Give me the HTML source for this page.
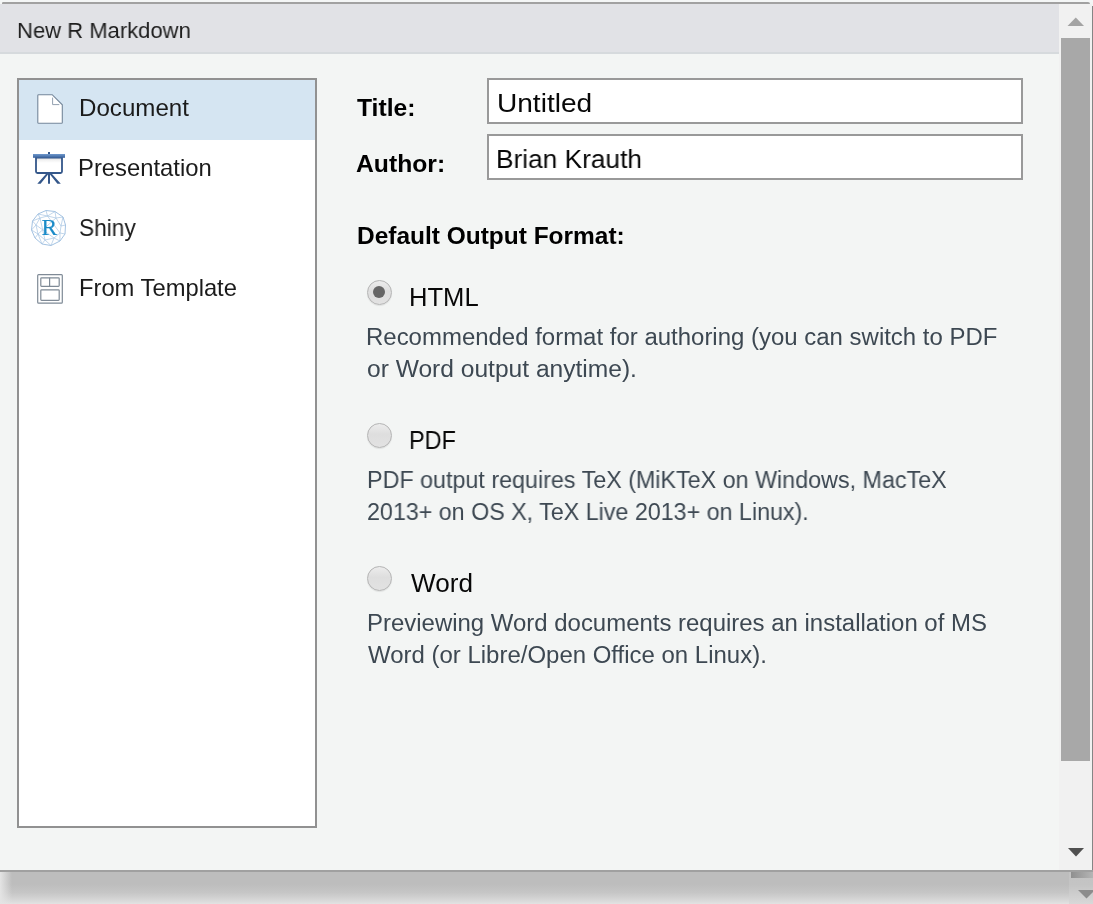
<!DOCTYPE html>
<html><head><meta charset="utf-8">
<style>
html,body{margin:0;padding:0;}
body{width:1093px;height:904px;position:relative;overflow:hidden;background:#f3f5f4;font-family:"Liberation Sans",sans-serif;}
.abs{position:absolute;}
.t{position:absolute;white-space:nowrap;line-height:1;transform-origin:0 0;will-change:transform;}
#shadow{left:0;top:872px;width:1093px;height:32px;background:linear-gradient(to bottom,#bdbdbd 0%,#bdbdbd 38%,#c6c6c6 65%,#d6d6d6 86%,#e2e2e2 100%);}
#shadowL{left:0;top:872px;width:12px;height:32px;background:linear-gradient(to right,#e4e4e4,rgba(228,228,228,0));}
#topstrip{left:0;top:0;width:1093px;height:2px;background:#f4f6f6;}
#topborder{left:2px;top:2px;width:1088px;height:2px;background:#a1a1a1;border-radius:2px 3px 0 0;}
#titlebar{left:0;top:4px;width:1059px;height:48px;background:#e1e2e6;}
#titleline{left:0;top:52px;width:1059px;height:2px;background:#d6dadd;}
#track{left:1059px;top:4px;width:33px;height:866px;background:#f1f1f1;}
#thumb{left:1061px;top:38px;width:29px;height:723px;background:#a8a8a8;}
#rborder{left:1092px;top:6px;width:1px;height:866px;background:#858585;}
#bborder{left:0;top:870px;width:1093px;height:2px;background:#a0a0a0;}
#list{left:17px;top:78px;width:296px;height:746px;border:2px solid #919191;background:#fff;}
#sel{left:19px;top:80px;width:296px;height:60px;background:#d5e5f2;}
.side{color:#1b1b1b;}
.ttl{color:#1e1e1e;}
.bold{font-weight:bold;color:#000;}
.inp{left:487px;width:532px;height:42px;border:2px solid #999;background:#fff;}
.inptxt{color:#080808;}
.rlabel{color:#080808;}
.desc{color:#3d4852;}
.radio{width:23px;height:23px;border-radius:50%;border:1px solid #b4b4b4;background:linear-gradient(to bottom,#ececec 0%,#dedede 45%,#e2e2e2 100%);box-shadow:0 1px 1px rgba(0,0,0,0.08);left:367px;}
.dot{width:12px;height:12px;border-radius:50%;background:#666;left:373.1px;}
</style></head><body>
<div class="abs" id="shadow"></div>
<div class="abs" id="shadowL"></div>
<div class="abs" id="topstrip"></div>
<div class="abs" id="titlebar"></div>
<div class="abs" id="titleline"></div>
<div class="abs" id="track"></div>
<div class="abs" id="topborder"></div>
<div class="abs" id="thumb"></div>
<div class="abs" id="rborder"></div>
<div class="abs" id="bborder"></div>
<!-- scrollbar arrows -->
<svg class="abs" style="left:1059px;top:4px" width="33" height="30"><polygon points="8.5,22 25,22 16.8,13.5" fill="#a3a3a3"/></svg>
<svg class="abs" style="left:1059px;top:840px" width="33" height="30"><polygon points="9,8 25,8 17,16.5" fill="#505050"/></svg>
<!-- second scrollbar (partially visible) -->
<div class="abs" style="left:1069px;top:872px;width:24px;height:32px;background:linear-gradient(to bottom,#c3c3c3 0%,#c4c4c4 40%,#d8d8d8 100%)"></div>
<div class="abs" style="left:1071px;top:872px;width:22px;height:6px;background:linear-gradient(to right,#8f8f8f,#b5b5b5)"></div>
<svg class="abs" style="left:1069px;top:886px" width="24" height="16"><polygon points="9,4 26,4 17.5,12.5" fill="#8c8c8c"/></svg>

<div class="t ttl" id="ttl" style="left:16.6px;top:19px;font-size:22.7px;transform:scaleX(0.9705)">New R Markdown</div>

<div class="abs" id="list"></div>
<div class="abs" id="sel"></div>
<div class="t side" id="s1" style="left:78.7px;top:97px;font-size:23.6px;transform:scaleX(1.0229)">Document</div>
<div class="t side" id="s2" style="left:78.2px;top:157px;font-size:23.6px;transform:scaleX(1.0093)">Presentation</div>
<div class="t side" id="s3" style="left:79.0px;top:217px;font-size:23.6px;transform:scaleX(0.9621)">Shiny</div>
<div class="t side" id="s4" style="left:78.5px;top:277px;font-size:23.6px;transform:scaleX(1.0065)">From Template</div>

<!-- icons -->
<svg class="abs" style="left:24px;top:84px" width="50" height="50" viewBox="0 0 50 50">
<path d="M14.6 10.7 H28.2 L38.3 20.8 V38.4 Q38.3 39.2 37.5 39.2 H14.6 Q13.8 39.2 13.8 38.4 V11.5 Q13.8 10.7 14.6 10.7 Z" fill="#fff" stroke="#74869a" stroke-width="1.1"/>
<path d="M28.6 13.6 V20.6 H35.3" fill="none" stroke="#93a1b0" stroke-width="1"/>
</svg>
<svg class="abs" style="left:24px;top:144px" width="50" height="50" viewBox="0 0 50 50">
<defs><linearGradient id="pg" x1="0" y1="0" x2="0" y2="1"><stop offset="0" stop-color="#6f98cc"/><stop offset="1" stop-color="#38609a"/></linearGradient>
<linearGradient id="sg" x1="0" y1="0" x2="0" y2="1"><stop offset="0" stop-color="#dcdcdc"/><stop offset="0.2" stop-color="#f4f4f4"/><stop offset="0.35" stop-color="#fff"/></linearGradient></defs>
<rect x="24" y="8" width="2" height="3" fill="#34578a"/>
<path d="M12 13.5 V27.5 Q12 29 13.5 29 H36.5 Q38 29 38 27.5 V13.5 Z" fill="url(#sg)" stroke="#34578a" stroke-width="1.8"/>
<rect x="9" y="10" width="32" height="3.8" fill="url(#pg)"/>
<path d="M24 29.5 H26 V39.8 H24 Z M22.2 29.8 H24.6 L16.6 39.8 H13.3 Z M25.4 29.8 H27.8 L36.8 39.8 H33.4 Z" fill="#34578a"/>
</svg>
<svg class="abs" style="left:24px;top:204px;will-change:transform" width="50" height="50" viewBox="0 0 50 50">
<g fill="none" stroke="#9dbfe0" stroke-width="0.7" opacity="0.9">
<polygon points="22,6.5 31,7.5 39,13 41.5,21 41,30 36,37 27,41.5 18,40 11,34 7.5,26 8.5,17 14,10" stroke="#8db3da" stroke-width="0.9"/>
<path d="M22 6.5 L23.5 12 L14 10 M23.5 12 L31 7.5 M23.5 12 L32 14 L39 13 M32 14 L31 7.5 M32 14 L37 22 L41.5 21 M37 22 L39 13 M37 22 L36 29 L41 30 M36 29 L36 37 M36 29 L30 34 L27 41.5 M30 34 L36 37 M30 34 L21 36 L18 40 M21 36 L27 41.5 M21 36 L14 30 L11 34 M14 30 L18 40 M14 30 L7.5 26 M14 30 L12 21 L8.5 17 M12 21 L7.5 26 M12 21 L16 14 L14 10 M16 14 L8.5 17 M16 14 L23.5 12  M16 14 L21 36 M23.5 12 L36 29 M12 21 L30 34 M32 14 L14 30"/>
</g>
<text x="17.6" y="31.2" font-family="Liberation Serif, serif" font-size="23.5" fill="#1a8bc8" stroke="#1a8bc8" stroke-width="0.15">R</text>
</svg>
<svg class="abs" style="left:24px;top:264px" width="50" height="50" viewBox="0 0 50 50">
<rect x="13.7" y="10.7" width="24.6" height="28.5" rx="0.9" fill="#fff" stroke="#7f8a96" stroke-width="1.2"/>
<rect x="16.8" y="13.8" width="18.4" height="8.6" rx="0.8" fill="none" stroke="#7f8a96" stroke-width="1.2"/>
<path d="M25.6 13.8 V22.4" stroke="#7f8a96" stroke-width="1.2"/>
<rect x="16.8" y="25.8" width="18.4" height="10.6" rx="0.8" fill="none" stroke="#7f8a96" stroke-width="1.2"/>
</svg>

<div class="t bold" id="b1" style="left:357.3px;top:97px;font-size:23.6px;transform:scaleX(1.0446)">Title:</div>
<div class="t bold" id="b2" style="left:356.3px;top:153px;font-size:23.6px;transform:scaleX(1.0464)">Author:</div>
<div class="t bold" id="b3" style="left:356.6px;top:225px;font-size:23.6px;transform:scaleX(1.0369)">Default Output Format:</div>
<div class="abs inp" style="top:78px"></div>
<div class="abs inp" style="top:134px"></div>
<div class="t inptxt" id="i1" style="left:496.5px;top:90px;font-size:26.6px;transform:scaleX(1.0552)">Untitled</div>
<div class="t inptxt" id="i2" style="left:496.4px;top:146px;font-size:26.6px;transform:scaleX(0.9875)">Brian Krauth</div>

<div class="abs radio" style="top:280px"></div><div class="abs dot" style="top:286.1px"></div>
<div class="t rlabel" id="r1" style="left:409.0px;top:285px;font-size:25.6px;transform:scaleX(0.9941)">HTML</div>
<div class="t desc" id="d1" style="left:366.4px;top:326px;font-size:23.5px;transform:scaleX(1.0199)">Recommended format for authoring (you can switch to PDF</div>
<div class="t desc" id="d2" style="left:366.8px;top:358px;font-size:23.5px;transform:scaleX(1.0455)">or Word output anytime).</div>

<div class="abs radio" style="top:423px"></div>
<div class="t rlabel" id="r2" style="left:408.7px;top:428px;font-size:25.6px;transform:scaleX(0.9167)">PDF</div>
<div class="t desc" id="d3" style="left:366.7px;top:469px;font-size:23.5px;transform:scaleX(0.9914)">PDF output requires TeX (MiKTeX on Windows, MacTeX</div>
<div class="t desc" id="d4" style="left:366.9px;top:501px;font-size:23.5px;transform:scaleX(0.9896)">2013+ on OS X, TeX Live 2013+ on Linux).</div>

<div class="abs radio" style="top:566px"></div>
<div class="t rlabel" id="r3" style="left:410.7px;top:571px;font-size:25.6px;transform:scaleX(1.0204)">Word</div>
<div class="t desc" id="d5" style="left:366.7px;top:612px;font-size:23.5px;transform:scaleX(1.0192)">Previewing Word documents requires an installation of MS</div>
<div class="t desc" id="d6" style="left:367.8px;top:644px;font-size:23.5px;transform:scaleX(1.02)">Word (or Libre/Open Office on Linux).</div>
</body></html>
